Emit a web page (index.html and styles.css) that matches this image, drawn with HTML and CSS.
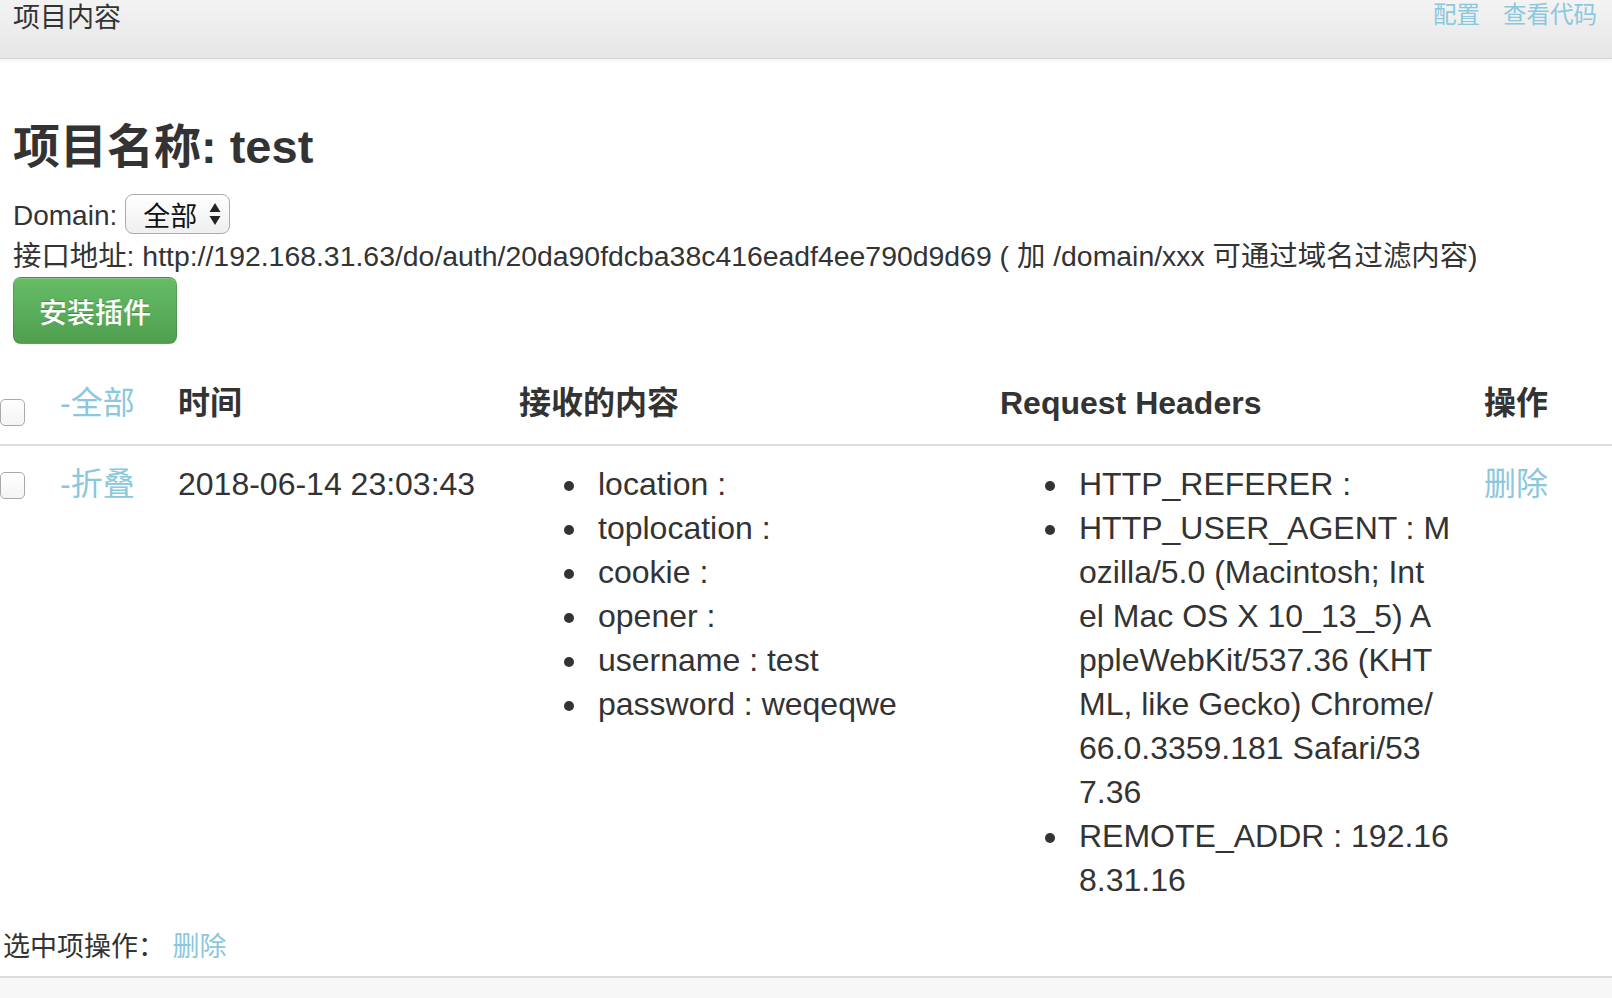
FILE: index.html
```html
<!DOCTYPE html>
<html lang="zh-CN">
<head>
<meta charset="utf-8">
<title>项目内容</title>
<link rel="stylesheet" href="styles.css">
</head>
<body>
<div class="navbar">
  <div class="brand">项目内容</div>
  <div class="nav-links">
    <a class="link" href="#">配置</a>
    <a class="link" href="#">查看代码</a>
  </div>
</div>
<div class="main">
  <h2 class="title">项目名称: test</h2>
  <div class="domain">
    <span class="label">Domain:</span>
    <span class="select">全部<svg class="arrows" width="12" height="24" viewBox="0 0 12 24"><path d="M0.5 10 L6 1 L11.5 10 Z" fill="#222"/><path d="M0.5 14 L6 23 L11.5 14 Z" fill="#222"/></svg></span>
  </div>
  <div class="api">接口地址: http://192.168.31.63/do/auth/20da90fdcba38c416eadf4ee790d9d69 ( 加 /domain/xxx 可通过域名过滤内容)</div>
  <button class="btn-success">安装插件</button>
</div>
<table class="data">
  <colgroup>
    <col class="c1"><col class="c2"><col class="c3"><col class="c4"><col class="c5"><col class="c6">
  </colgroup>
  <thead>
    <tr>
      <th><span class="check check-head"></span></th>
      <th><a class="link normal" href="#">-全部</a></th>
      <th>时间</th>
      <th>接收的内容</th>
      <th>Request Headers</th>
      <th>操作</th>
    </tr>
  </thead>
  <tbody>
    <tr>
      <td><span class="check check-row"></span></td>
      <td><a class="link" href="#">-折叠</a></td>
      <td>2018-06-14 23:03:43</td>
      <td>
        <ul class="kv">
          <li>location :</li>
          <li>toplocation :</li>
          <li>cookie :</li>
          <li>opener :</li>
          <li>username : test</li>
          <li>password : weqeqwe</li>
        </ul>
      </td>
      <td>
        <ul class="kv">
          <li>HTTP_REFERER :</li>
          <li>HTTP_USER_AGENT : M<br>ozilla/5.0 (Macintosh; Int<br>el Mac OS X 10_13_5) A<br>ppleWebKit/537.36 (KHT<br>ML, like Gecko) Chrome/<br>66.0.3359.181 Safari/53<br>7.36</li>
          <li>REMOTE_ADDR : 192.16<br>8.31.16</li>
        </ul>
      </td>
      <td><a class="link" href="#">删除</a></td>
    </tr>
  </tbody>
</table>
<div class="selected-ops">选中项操作： <a class="link" href="#">删除</a></div>
<div class="footer"></div>
</body>
</html>
```

FILE: styles.css
```css
html, body {
  margin: 0;
  padding: 0;
  background: #ffffff;
}
body {
  font-family: "Liberation Sans", "Noto Sans CJK SC", sans-serif;
  color: #333333;
  width: 1612px;
  height: 998px;
  overflow: hidden;
}
.link {
  color: #8bc7dd;
  text-decoration: none;
}
.navbar {
  height: 59px;
  box-sizing: border-box;
  display: flex;
  justify-content: space-between;
  align-items: flex-start;
  padding: 0 15px 0 13px;
  background: linear-gradient(#f3f3f3, #e6e6e6);
  border-bottom: 1px solid #d6d6d6;
  box-shadow: 0 1px 4px rgba(0, 0, 0, 0.08);
}
.brand {
  font-size: 27px;
  line-height: 37px;
  color: #333;
}
.nav-links {
  display: flex;
  gap: 23px;
  font-size: 23.5px;
  line-height: 30px;
}
.main {
  padding: 0 13px;
}
.title {
  margin: 60px 0 0 0;
  font-size: 47px;
  line-height: 56px;
  font-weight: bold;
  color: #333;
}
.domain {
  margin-top: 21px;
  height: 40px;
  display: flex;
  align-items: center;
  font-size: 28px;
}
.label {
  margin-right: 8px;
}
.select {
  box-sizing: border-box;
  width: 105px;
  height: 40px;
  margin-top: -4px;
  display: flex;
  align-items: center;
  justify-content: space-between;
  padding: 0 8px 0 17px;
  border: 1px solid #aaaaaa;
  border-radius: 8px;
  background: linear-gradient(#ffffff, #efefef);
  font-size: 27px;
  color: #111;
}
.arrows {
  display: block;
}
.api {
  font-size: 28.4px;
  line-height: 40px;
}
.btn-success {
  display: block;
  margin-top: 1px;
  width: 164px;
  height: 67px;
  padding: 0;
  border: 1px solid rgba(0, 0, 0, 0.12);
  border-radius: 8px;
  background: linear-gradient(#66bd66, #4f9f4f);
  color: #ffffff;
  font-family: "Liberation Sans", "Noto Sans CJK SC", sans-serif;
  font-size: 28px;
  font-weight: 500;
  text-shadow: 0 -1px 0 rgba(0, 0, 0, 0.2);
  box-shadow: inset 0 1px 0 rgba(255, 255, 255, 0.2), 0 1px 2px rgba(0, 0, 0, 0.05);
}
.data {
  margin-top: 17px;
  width: 1612px;
  table-layout: fixed;
  border-collapse: collapse;
  font-size: 32px;
  line-height: 44px;
}
.c1 { width: 60px; }
.c2 { width: 118px; }
.c3 { width: 341px; }
.c4 { width: 481px; }
.c5 { width: 484px; }
.c6 { width: 128px; }
.data th {
  text-align: left;
  vertical-align: top;
  font-weight: bold;
  padding: 20px 0 18px 0;
  border-bottom: 2px solid #dddddd;
  white-space: nowrap;
}
.data th .normal {
  font-weight: normal;
}
.data td {
  vertical-align: top;
  padding: 16px 0 22px 0;
  white-space: nowrap;
}
.check {
  display: block;
  box-sizing: border-box;
  width: 25px;
  height: 27px;
  border: 1px solid #a9a9a9;
  border-radius: 5px;
  background: linear-gradient(#ffffff, #f4f4f4);
}
.check-head {
  margin-top: 18px;
}
.check-row {
  margin-top: 10px;
}
.kv {
  margin: 0;
  padding-left: 71px;
  list-style: disc;
}
.kv li {
  padding-left: 8px;
}
.selected-ops {
  padding-left: 3px;
  font-size: 27px;
  line-height: 46px;
  height: 52px;
}
.footer {
  height: 40px;
  border-top: 2px solid #dddddd;
  background: #f7f7f7;
}
```
